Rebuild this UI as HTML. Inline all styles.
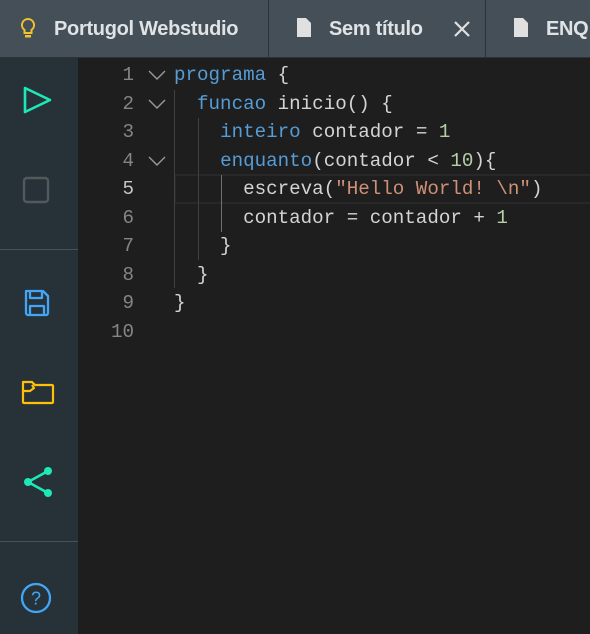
<!DOCTYPE html>
<html><head><meta charset="utf-8"><style>
*{margin:0;padding:0;box-sizing:border-box}
body{width:590px;height:634px;overflow:hidden;background:#1e1e1e;font-family:"Liberation Sans",sans-serif;position:relative}
#hdr{position:absolute;left:0;top:0;width:590px;height:58px;background:#454f57;border-bottom:1px solid #2b3238}
.sep{position:absolute;top:0;width:1px;height:57px;background:#2b3238}
.t{position:absolute;top:18px;font-size:20px;font-weight:bold;color:#dfe3e6;letter-spacing:-0.3px}
#side{position:absolute;left:0;top:58px;width:78px;height:576px;background:#263238}
.hr{position:absolute;left:0;width:78px;height:1px;background:#46525a}
.ic{position:absolute}
#code{position:absolute;left:78px;top:60px;right:0;bottom:0;font-family:"Liberation Mono",monospace;font-size:19.2px}
.ln{position:absolute;left:0;width:56px;text-align:right;color:#858585;height:28.5px;line-height:28.5px}
.cl{position:absolute;left:96px;white-space:pre;color:#d4d4d4;height:28.5px;line-height:28.5px}
.k{color:#569cd6}.n{color:#b5cea8}.s{color:#ce9178}
.g{position:absolute;width:1px;background:#404040}
.fold{position:absolute;left:70px}
</style></head><body>
<div id="hdr">
 <svg class="ic" style="left:20px;top:17px" width="16" height="24" viewBox="0 0 16 24"><path d="M8 2a6 6 0 0 0-3.5 10.9V16h7v-3.1A6 6 0 0 0 8 2z" fill="none" stroke="#f2c12e" stroke-width="2"/><rect x="5" y="18" width="6" height="2.5" fill="#f2c12e"/></svg>
 <div class="t" style="left:54px">Portugol Webstudio</div>
 <div class="sep" style="left:268px"></div>
 <svg class="ic" style="left:297px;top:18px" width="14" height="19" viewBox="0 0 14 19"><path d="M0 0h9l5 5v14H0z" fill="#e0e0e0"/></svg>
 <div class="t" style="left:329px">Sem título</div>
 <svg class="ic" style="left:453px;top:20px" width="18" height="18" viewBox="0 0 18 18"><path d="M2 2L16 16M16 2L2 16" stroke="#e0e0e0" stroke-width="2.2"/></svg>
 <div class="sep" style="left:485px"></div>
 <svg class="ic" style="left:514px;top:18px" width="14" height="19" viewBox="0 0 14 19"><path d="M0 0h9l5 5v14H0z" fill="#e0e0e0"/></svg>
 <div class="t" style="left:546px">ENQ</div>
</div>
<div id="side">
 <svg class="ic" style="left:22px;top:27px" width="30" height="30" viewBox="0 0 30 30"><path d="M3 3L28 15L3 27Z" fill="none" stroke="#1de9b6" stroke-width="2.6" stroke-linejoin="round"/></svg>
 <svg class="ic" style="left:22px;top:118px" width="28" height="28" viewBox="0 0 28 28"><rect x="2" y="2" width="24" height="24" rx="3" fill="none" stroke="#53585b" stroke-width="2.4"/></svg>
 <div class="hr" style="top:191px"></div>
 <svg class="ic" style="left:23px;top:230px" width="28" height="30" viewBox="0 0 28 30"><path d="M3 3h17l5 5v17a2 2 0 0 1-2 2H5a2 2 0 0 1-2-2z M7 3v7h12V3 M7 27v-9h14v9" fill="none" stroke="#42a5f5" stroke-width="2.3" stroke-linejoin="round"/></svg>
 <svg class="ic" style="left:21px;top:321px" width="34" height="26" viewBox="0 0 34 26"><path d="M2 3h9l3 3v0h17a1 1 0 0 1 1 1v16a1 1 0 0 1-1 1H3a1 1 0 0 1-1-1z M2 12h7l4-3h-1 M13 9l-2-3" fill="none" stroke="#ffc107" stroke-width="2.2" stroke-linejoin="round"/></svg>
 <svg class="ic" style="left:22px;top:408px" width="32" height="32" viewBox="0 0 32 32"><path d="M6 16L26 5M6 16L26 27" stroke="#1de9b6" stroke-width="2.6"/><circle cx="6" cy="16" r="4" fill="#1de9b6"/><circle cx="26" cy="5" r="4" fill="#1de9b6"/><circle cx="26" cy="27" r="4" fill="#1de9b6"/></svg>
 <div class="hr" style="top:483px"></div>
 <svg class="ic" style="left:20px;top:524px" width="32" height="32" viewBox="0 0 32 32"><circle cx="16" cy="16" r="14" fill="none" stroke="#42a5f5" stroke-width="2.3"/><text x="16" y="22.5" text-anchor="middle" font-family="Liberation Sans" font-size="18" fill="#42a5f5">?</text></svg>
</div>
<div id="code">
 <div style="position:absolute;left:96px;right:-2px;top:114px;height:30px;border:2px solid #282828"></div>
 <div class="g" style="left:96px;top:30px;height:198px"></div>
 <div class="g" style="left:119.5px;top:58px;height:142px"></div>
 <div class="g" style="left:143px;top:115px;height:57px;background:#707070"></div>
 <div class="ln" style="top:1px">1</div><div class="ln" style="top:29.5px">2</div><div class="ln" style="top:58px">3</div><div class="ln" style="top:86.5px">4</div><div class="ln" style="top:115px;color:#c6c6c6">5</div><div class="ln" style="top:143.5px">6</div><div class="ln" style="top:172px">7</div><div class="ln" style="top:200.5px">8</div><div class="ln" style="top:229px">9</div><div class="ln" style="top:257.5px">10</div>
 <svg class="fold" style="top:10px" width="18" height="10" viewBox="0 0 18 10"><path d="M1 1l8 8 8-8" fill="none" stroke="#9a9a9a" stroke-width="1.4"/></svg>
 <svg class="fold" style="top:38.5px" width="18" height="10" viewBox="0 0 18 10"><path d="M1 1l8 8 8-8" fill="none" stroke="#9a9a9a" stroke-width="1.4"/></svg>
 <svg class="fold" style="top:95.5px" width="18" height="10" viewBox="0 0 18 10"><path d="M1 1l8 8 8-8" fill="none" stroke="#9a9a9a" stroke-width="1.4"/></svg>
 <div class="cl" style="top:1px"><span class="k">programa</span> {</div>
 <div class="cl" style="top:29.5px">  <span class="k">funcao</span> inicio() {</div>
 <div class="cl" style="top:58px">    <span class="k">inteiro</span> contador = <span class="n">1</span></div>
 <div class="cl" style="top:86.5px">    <span class="k">enquanto</span>(contador &lt; <span class="n">10</span>){</div>
 <div class="cl" style="top:115px">      escreva(<span class="s">"Hello World! \n"</span>)</div>
 <div class="cl" style="top:143.5px">      contador = contador + <span class="n">1</span></div>
 <div class="cl" style="top:172px">    }</div>
 <div class="cl" style="top:200.5px">  }</div>
 <div class="cl" style="top:229px">}</div>
</div>
</body></html>
